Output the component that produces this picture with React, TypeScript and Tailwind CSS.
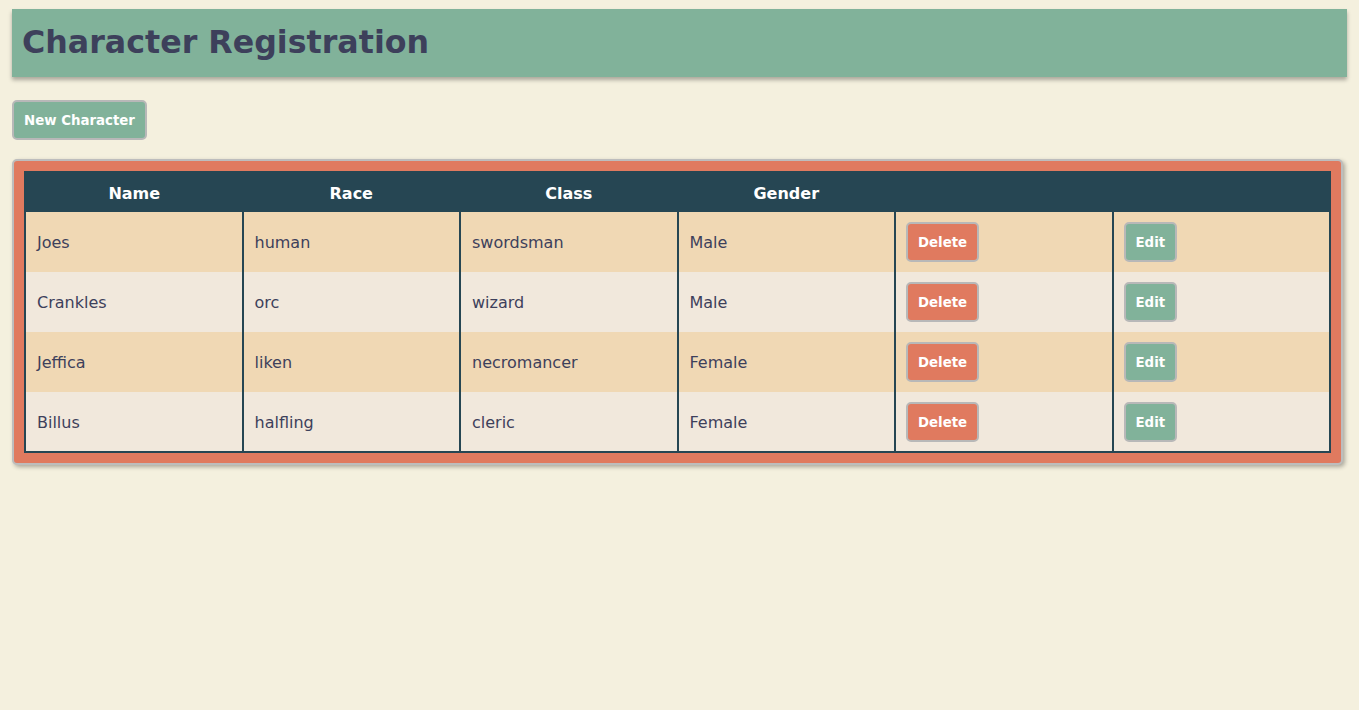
const characters = [
  { name: "Joes", race: "human", cls: "swordsman", gender: "Male" },
  { name: "Crankles", race: "orc", cls: "wizard", gender: "Male" },
  { name: "Jeffica", race: "liken", cls: "necromancer", gender: "Female" },
  { name: "Billus", race: "halfling", cls: "cleric", gender: "Female" },
];

function App() {
  return (
    <div className="min-h-[710px] bg-[#f4f0de] pt-[9px] px-3 font-['DejaVu_Sans',sans-serif] text-[#3d405b]">
      <header className="bg-[#81b29a] h-[68px] px-[10px] flex items-center shadow-[0_3px_4px_rgba(0,0,0,0.3)]">
        <h1 className="text-[31.7px] font-bold leading-none -mt-[1px]">Character Registration</h1>
      </header>

      <button className="mt-[23px] h-[40px] px-[10px] pt-[2px] bg-[#81b29a] border-2 border-[#b8b8b8] rounded-[5px] text-white text-[13.333px] font-bold">
        New Character
      </button>

      <div className="mt-[19px] w-[1331px] bg-[#e07a5f] border-2 border-[#bdbdbd] rounded-[5px] p-[10px] shadow-[2px_2px_4px_rgba(0,0,0,0.3)]">
        <table className="w-full border-collapse border-2 border-[#264653] table-fixed">
          <thead>
            <tr className="bg-[#264653] text-white h-[40px]">
              <th className="font-bold text-base pt-[2px]">Name</th>
              <th className="font-bold text-base pt-[2px]">Race</th>
              <th className="font-bold text-base pt-[2px]">Class</th>
              <th className="font-bold text-base pt-[2px]">Gender</th>
              <th></th>
              <th></th>
            </tr>
          </thead>
          <tbody>
            {characters.map((c, i) => (
              <tr
                key={c.name}
                className={i % 2 === 0 ? "bg-[#f0d8b4] h-[60px]" : "bg-[#f1e8dc] h-[60px]"}
              >
                <td className="border-x-2 border-[#264653] pl-[11px] pr-[10px] pt-[2px] text-base">{c.name}</td>
                <td className="border-x-2 border-[#264653] pl-[11px] pr-[10px] pt-[2px] text-base">{c.race}</td>
                <td className="border-x-2 border-[#264653] pl-[11px] pr-[10px] pt-[2px] text-base">{c.cls}</td>
                <td className="border-x-2 border-[#264653] pl-[11px] pr-[10px] pt-[2px] text-base">{c.gender}</td>
                <td className="border-x-2 border-[#264653] px-[10px]">
                  <button className="h-[40px] px-[10px] pt-[2px] bg-[#e07a5f] border-2 border-[#b8b8b8] rounded-[5px] text-white text-[13.333px] font-bold">
                    Delete
                  </button>
                </td>
                <td className="border-x-2 border-[#264653] px-[10px]">
                  <button className="h-[40px] px-[10px] pt-[2px] bg-[#81b29a] border-2 border-[#b8b8b8] rounded-[5px] text-white text-[13.333px] font-bold">
                    Edit
                  </button>
                </td>
              </tr>
            ))}
          </tbody>
        </table>
      </div>
    </div>
  );
}

export default App;
